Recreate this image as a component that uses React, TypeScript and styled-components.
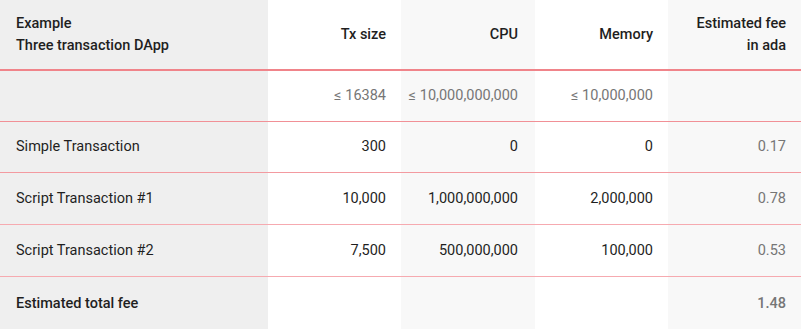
import React from "react";
import styled, { createGlobalStyle } from "styled-components";

const Global = createGlobalStyle`
  html, body { margin: 0; padding: 0; background: #ffffff; }
  body { font-family: Roboto, "Liberation Sans", Arial, sans-serif; }
  * { box-sizing: border-box; }
`;

const Table = styled.div`
  width: 801px;
  height: 329px;
  overflow: hidden;
  display: flex;
  flex-direction: column;
  font-size: 14.5px;
  color: #1f1f1f;
`;

const Row = styled.div<{ $h: number; $line?: string; $lw?: number }>`
  display: grid;
  grid-template-columns: 268px 133px 134px 133px 133px;
  height: ${(p) => p.$h}px;
  flex: none;
  border-bottom: ${(p) => (p.$line ? `${p.$lw ?? 1}px solid ${p.$line}` : "none")};
`;

const bgs = ["#efefef", "#ffffff", "#f8f8f8", "#ffffff", "#f8f8f8"];

const Cell = styled.div<{ $col: number; $tone?: "dark" | "muted"; $weight?: number }>`
  background: ${(p) => bgs[p.$col]};
  display: flex;
  flex-direction: column;
  justify-content: center;
  align-items: ${(p) => (p.$col === 0 ? "flex-start" : "flex-end")};
  text-align: ${(p) => (p.$col === 0 ? "left" : "right")};
  padding: ${(p) => (p.$col === 0 ? "0 0 0 16px" : p.$col === 2 ? "0 17px 0 0" : "0 15px 0 0")};
  line-height: 22px;
  color: ${(p) => (p.$tone === "muted" ? "#767676" : "#1f1f1f")};
  font-weight: ${(p) => p.$weight ?? 400};
  white-space: nowrap;
`;

type R = { cells: string[]; muted?: number[] };

const body: R[] = [
  { cells: ["Simple Transaction", "300", "0", "0", "0.17"], muted: [4] },
  { cells: ["Script Transaction #1", "10,000", "1,000,000,000", "2,000,000", "0.78"], muted: [4] },
  { cells: ["Script Transaction #2", "7,500", "500,000,000", "100,000", "0.53"], muted: [4] },
];

const lines = ["#f19096", "#f39aa0", "#f6aab0", "#f6aab0"];
const heights = [51, 52, 52];

export default function App() {
  return (
    <>
      <Global />
      <Table>
        <Row $h={71} $line="#f0848a" $lw={2}>
          <Cell $col={0} $weight={500}>
            <span>Example</span>
            <span>Three transaction DApp</span>
          </Cell>
          <Cell $col={1} $weight={500}>Tx size</Cell>
          <Cell $col={2} $weight={500}>CPU</Cell>
          <Cell $col={3} $weight={500}>Memory</Cell>
          <Cell $col={4} $weight={500}>
            <span>Estimated fee</span>
            <span>in ada</span>
          </Cell>
        </Row>
        <Row $h={51} $line={lines[0]}>
          <Cell $col={0} />
          <Cell $col={1} $tone="muted">≤ 16384</Cell>
          <Cell $col={2} $tone="muted">≤ 10,000,000,000</Cell>
          <Cell $col={3} $tone="muted">≤ 10,000,000</Cell>
          <Cell $col={4} />
        </Row>
        {body.map((r, i) => (
          <Row key={i} $h={heights[i]} $line={lines[i + 1]}>
            {r.cells.map((c, j) => (
              <Cell key={j} $col={j} $tone={r.muted?.includes(j) ? "muted" : "dark"}>
                {c}
              </Cell>
            ))}
          </Row>
        ))}
        <Row $h={53}>
          <Cell $col={0} $weight={500}>Estimated total fee</Cell>
          <Cell $col={1} />
          <Cell $col={2} />
          <Cell $col={3} />
          <Cell $col={4} $tone="muted" $weight={500}>1.48</Cell>
        </Row>
      </Table>
    </>
  );
}
